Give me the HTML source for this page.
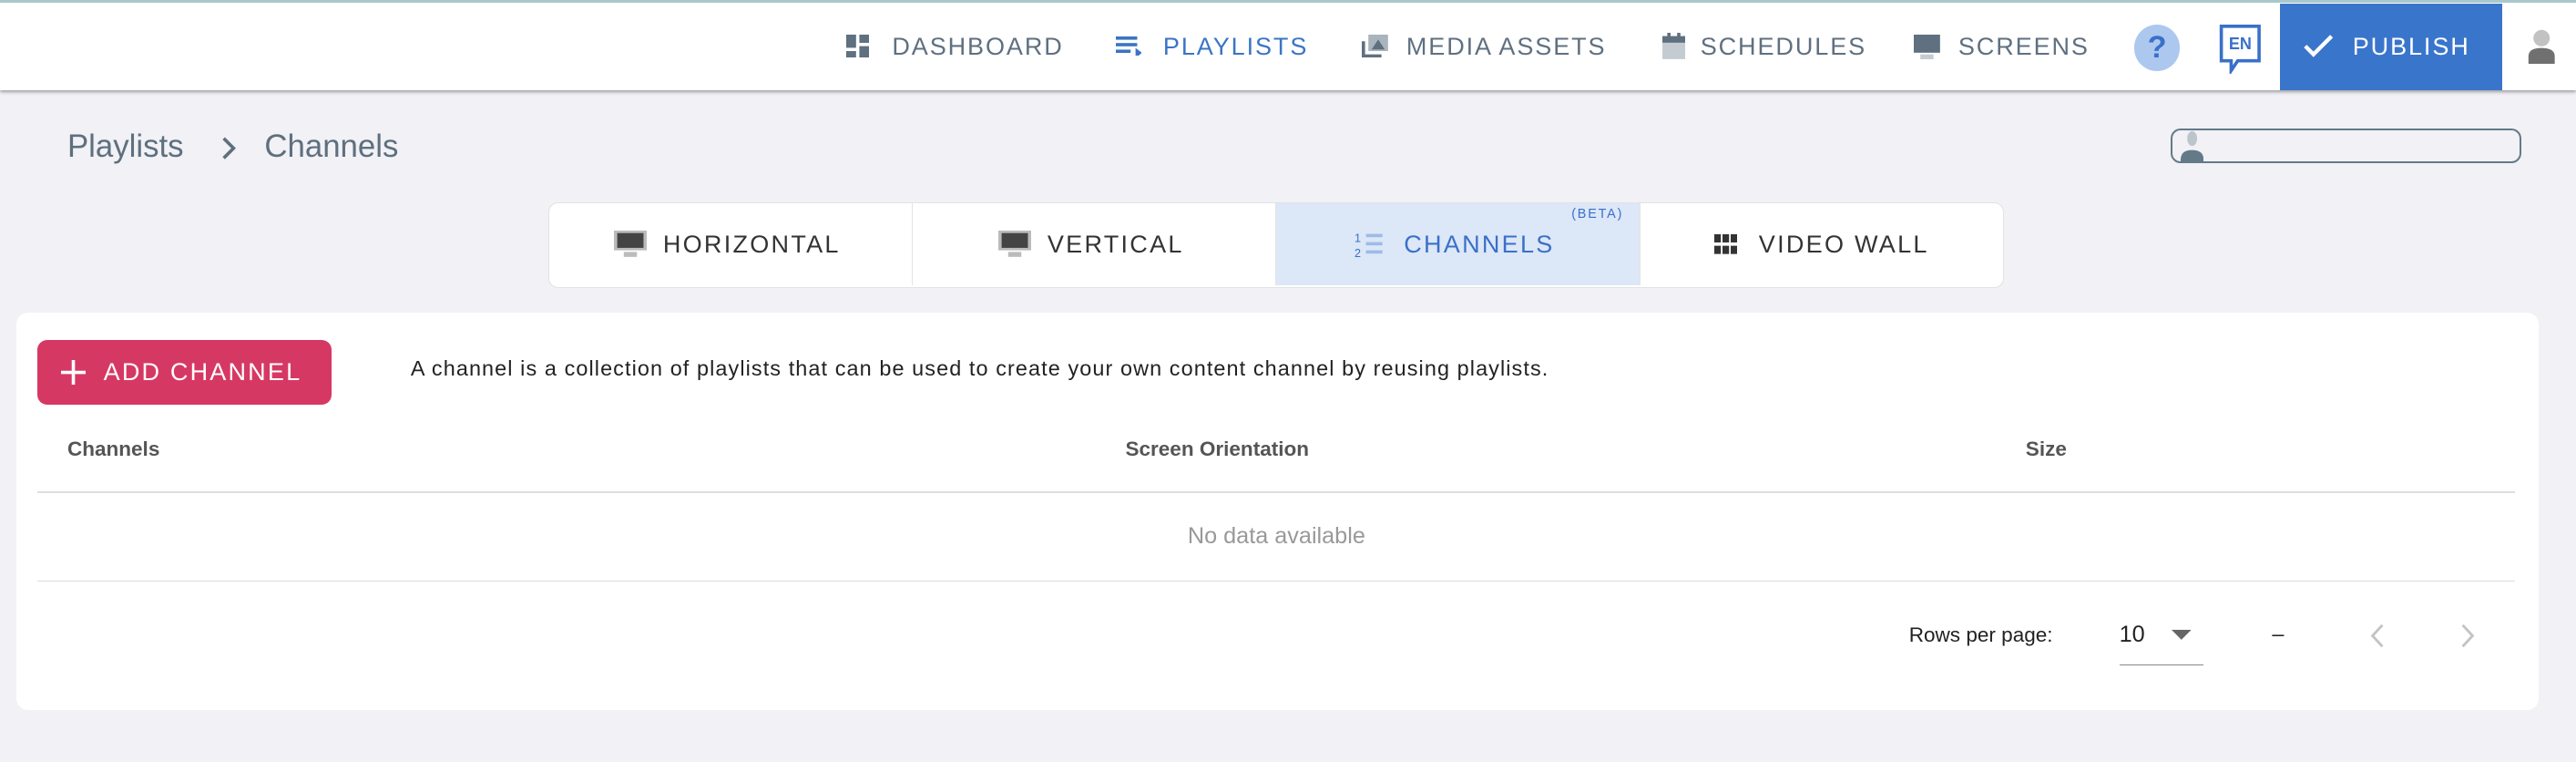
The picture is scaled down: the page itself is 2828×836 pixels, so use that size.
<!DOCTYPE html>
<html><head><meta charset="utf-8"><style>
html,body{margin:0;padding:0;width:2828px;height:836px;overflow:hidden;background:#f1f1f6}
#w{zoom:1.80357;width:1568px;height:464px;position:relative;font-family:"Liberation Sans",Arial,sans-serif}
.a{position:absolute;white-space:nowrap}
.hdr{position:absolute;left:0;top:0;width:1568px;height:55px;background:#fff;border-top:2px solid #a8c8cc;box-sizing:border-box;box-shadow:0 1px 2px rgba(0,0,0,.35)}
.nav{font-size:15px;letter-spacing:1.05px;color:#5f7080;top:20px}
.tab{position:absolute;top:0;height:50px;width:221px;border-right:1px solid #e3e3e3;box-sizing:border-box;font-size:15px;letter-spacing:1.25px;color:#333;line-height:50px}
</style></head><body><div id="w">
<div class="hdr"></div>
<svg class="a" style="left:515px;top:21px" width="14" height="14" viewBox="0 0 14 14"><rect x="0" y="0" width="6" height="8" fill="#5f7080"/><rect x="8" y="0" width="6" height="5" fill="#5f7080"/><rect x="0" y="10" width="6" height="4" fill="#5f7080"/><rect x="8" y="7" width="6" height="7" fill="#5f7080"/></svg>
<div class="a nav" style="left:543px">DASHBOARD</div>
<svg class="a" style="left:679px;top:22px" width="16" height="12" viewBox="0 0 16 12"><rect x="0" y="0" width="13" height="2" fill="#3a75c4"/><rect x="0" y="4" width="13" height="2" fill="#3a75c4"/><rect x="0" y="8" width="9" height="2" fill="#3a75c4"/><path d="M12 7l4 3-4 3z" fill="#3a75c4"/></svg>
<div class="a nav" style="left:708px;color:#3a75c4">PLAYLISTS</div>
<svg class="a" style="left:829px;top:21px" width="16" height="14" viewBox="0 0 16 14"><rect x="4" y="0" width="12" height="10" fill="#a9b4bd"/><path d="M6 9l4-6 4 6z" fill="#5f7080"/><path d="M1 4v9h11" stroke="#5f7080" stroke-width="2" fill="none"/></svg>
<div class="a nav" style="left:856px">MEDIA ASSETS</div>
<svg class="a" style="left:1012px;top:20px" width="14" height="16" viewBox="0 0 14 16"><rect x="0" y="2" width="14" height="14" fill="#c4ccd2"/><rect x="0" y="2" width="14" height="4" fill="#5f7080"/><rect x="3" y="0" width="2" height="4" fill="#5f7080"/><rect x="9" y="0" width="2" height="4" fill="#5f7080"/></svg>
<div class="a nav" style="left:1035px">SCHEDULES</div>
<svg class="a" style="left:1165px;top:21px" width="16" height="15" viewBox="0 0 16 15"><rect x="0" y="0" width="16" height="11" fill="#5f7080"/><rect x="4" y="12" width="8" height="3" fill="#c4ccd2"/></svg>
<div class="a nav" style="left:1192px">SCREENS</div>
<div class="a" style="left:1299px;top:15px;width:28px;height:28px;border-radius:50%;background:#adc8ee;color:#3a70c8;font-weight:bold;font-size:19px;text-align:center;line-height:28px">?</div>
<svg class="a" style="left:1350px;top:15px" width="28" height="30" viewBox="0 0 28 30"><path d="M2 1h23v21H12l-4 6v-6H2z" fill="#fff" stroke="#3a70c8" stroke-width="2"/><text x="13.5" y="15" font-family="Liberation Sans" font-weight="bold" font-size="10" fill="#3a70c8" text-anchor="middle">EN</text></svg>
<div class="a" style="left:1388px;top:2px;width:135px;height:53px;background:#3a75cc"></div>
<svg class="a" style="left:1402px;top:21px" width="18" height="14" viewBox="0 0 18 14"><path d="M1 7l5 5L17 1" stroke="#fff" stroke-width="2.4" fill="none"/></svg>
<div class="a nav" style="left:1432px;color:#fff">PUBLISH</div>
<svg class="a" style="left:1538px;top:17px" width="18" height="22" viewBox="0 0 18 22"><circle cx="9" cy="6" r="5" fill="#c2c2c2"/><path d="M1 22v-5q0-5 8-5t8 5v5z" fill="#707070"/></svg>
<div class="a" style="left:41px;top:78px;font-size:19.3px;color:#5f6f7d">Playlists</div>
<svg class="a" style="left:134px;top:83px" width="10" height="14" viewBox="0 0 10 14"><path d="M2 1l6 6-6 6" stroke="#5f6f7d" stroke-width="2" fill="none"/></svg>
<div class="a" style="left:161px;top:78px;font-size:19.3px;color:#5f6f7d">Channels</div>
<div class="a" style="left:1321px;top:78px;width:214px;height:21px;border:1.5px solid #647a88;border-radius:6px;box-sizing:border-box;overflow:hidden">
<svg style="position:absolute;left:5px;top:0" width="14" height="21" viewBox="0 0 14 21"><ellipse cx="7" cy="5" rx="3" ry="4.5" fill="#bcc5cc"/><path d="M0 21v-3q0-6 7-6t7 6v3z" fill="#647a88"/></svg></div>
<div class="a" style="left:334px;top:123px;width:886px;height:52px;background:#fff;border:1px solid #e2e2e2;border-radius:6px;box-sizing:border-box;overflow:hidden">
<div class="tab" style="left:0"><svg style="position:absolute;left:39px;top:17px" width="20" height="16" viewBox="0 0 20 16"><rect x="0" y="0" width="20" height="12" fill="#bbb"/><rect x="2" y="1.5" width="16" height="9" fill="#444"/><rect x="6" y="13" width="8" height="3" fill="#bbb"/></svg><span style="position:absolute;left:69px">HORIZONTAL</span></div>
<div class="tab" style="left:221px"><svg style="position:absolute;left:52px;top:17px" width="20" height="16" viewBox="0 0 20 16"><rect x="0" y="0" width="20" height="12" fill="#bbb"/><rect x="2" y="1.5" width="16" height="9" fill="#444"/><rect x="6" y="13" width="8" height="3" fill="#bbb"/></svg><span style="position:absolute;left:82px">VERTICAL</span></div>
<div class="tab" style="left:442px;background:#dce7f7;color:#3a70c8;width:222px"><svg style="position:absolute;left:48px;top:17px" width="18" height="16" viewBox="0 0 18 16"><text x="0" y="7" font-size="7" font-family="Liberation Sans" fill="#3a70c8">1</text><text x="0" y="16" font-size="7" font-family="Liberation Sans" fill="#3a70c8">2</text><rect x="7" y="2" width="10" height="2" fill="#9dbbe6"/><rect x="7" y="7" width="10" height="2" fill="#9dbbe6"/><rect x="7" y="12" width="10" height="2" fill="#9dbbe6"/></svg><span style="position:absolute;left:78px">CHANNELS</span><span style="position:absolute;left:180px;top:-18px;font-size:8px;letter-spacing:1px">(BETA)</span></div>
<div class="tab" style="left:664px;border-right:none"><svg style="position:absolute;left:45px;top:19px" width="14" height="12" viewBox="0 0 14 12"><g fill="#333"><rect x="0" y="0" width="4" height="5"/><rect x="5" y="0" width="4" height="5"/><rect x="10" y="0" width="4" height="5"/><rect x="0" y="7" width="4" height="5"/><rect x="5" y="7" width="4" height="5"/><rect x="10" y="7" width="4" height="5"/></g></svg><span style="position:absolute;left:72px">VIDEO WALL</span></div>
</div>
<div class="a" style="left:10px;top:190px;width:1535px;height:242px;background:#fff;border-radius:7px"></div>
<div class="a" style="left:23px;top:207px;width:179px;height:39px;background:#d63864;border-radius:6px;color:#fff;font-size:15px;letter-spacing:1.2px;line-height:39px">
<svg style="position:absolute;left:14px;top:12px" width="15" height="15" viewBox="0 0 15 15"><path d="M7.5 0v15M0 7.5h15" stroke="#fff" stroke-width="2"/></svg><span style="position:absolute;left:40px">ADD CHANNEL</span></div>
<div class="a" style="left:250px;top:217px;font-size:13px;color:#222;letter-spacing:.6px">A channel is a collection of playlists that can be used to create your own content channel by reusing playlists.</div>
<div class="a" style="left:41px;top:266px;font-size:12.5px;font-weight:bold;color:#555">Channels</div>
<div class="a" style="left:685px;top:266px;font-size:12.5px;font-weight:bold;color:#555">Screen Orientation</div>
<div class="a" style="left:1233px;top:266px;font-size:12.5px;font-weight:bold;color:#555">Size</div>
<div class="a" style="left:23px;top:299px;width:1508px;height:1px;background:#dedede"></div>
<div class="a" style="left:23px;top:318px;width:1508px;text-align:center;font-size:14px;color:#999">No data available</div>
<div class="a" style="left:23px;top:353px;width:1508px;height:1px;background:#dedede"></div>
<div class="a" style="left:1162px;top:379px;font-size:12.5px;color:#222">Rows per page:</div>
<div class="a" style="left:1290px;top:378px;font-size:14px;color:#222">10</div>
<svg class="a" style="left:1322px;top:383px" width="12" height="6" viewBox="0 0 12 6"><path d="M0 0h12L6 6z" fill="#666"/></svg>
<div class="a" style="left:1290px;top:404px;width:51px;height:1px;background:#888"></div>
<div class="a" style="left:1383px;top:378px;font-size:13px;color:#222">–</div>
<svg class="a" style="left:1442px;top:379px" width="10" height="15" viewBox="0 0 10 15"><path d="M8 1L2 7.5 8 14" stroke="#c4c4c4" stroke-width="1.6" fill="none"/></svg>
<svg class="a" style="left:1497px;top:379px" width="10" height="15" viewBox="0 0 10 15"><path d="M2 1l6 6.5L2 14" stroke="#c4c4c4" stroke-width="1.6" fill="none"/></svg>
</div></body></html>
